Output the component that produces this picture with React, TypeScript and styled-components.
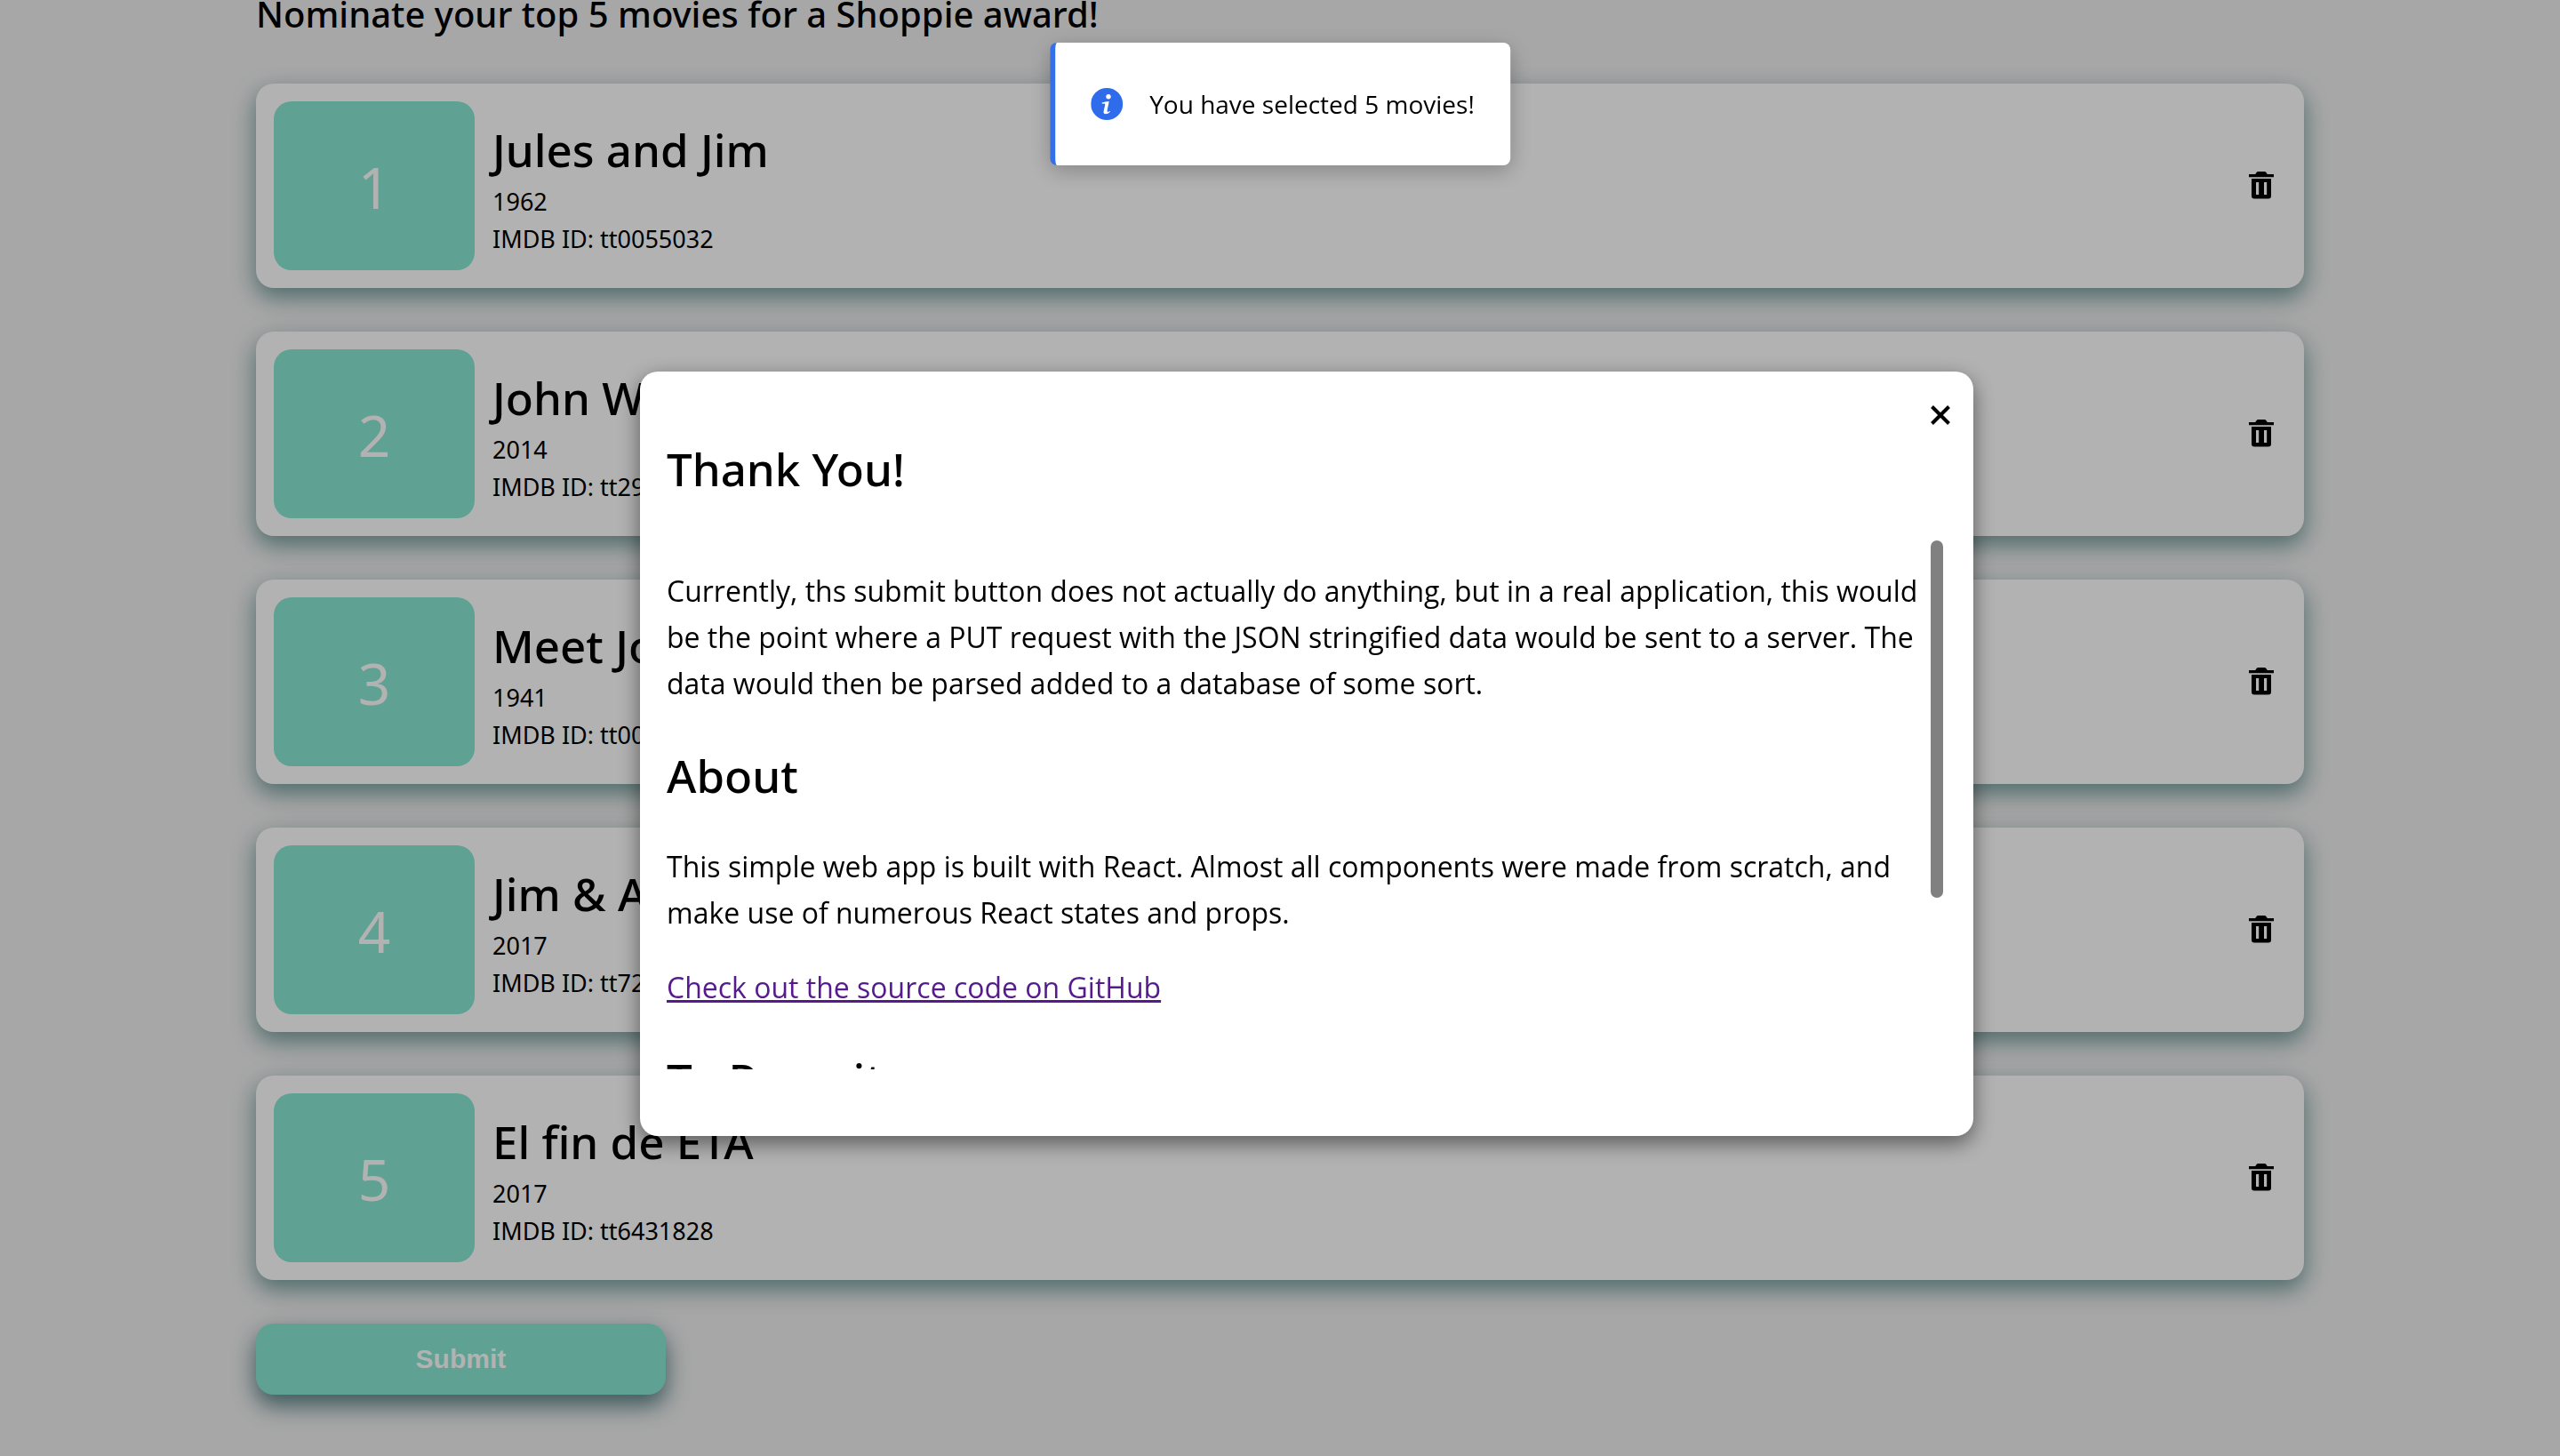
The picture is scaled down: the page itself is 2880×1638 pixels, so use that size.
import React, { useEffect, useRef, useState } from "react";
import styled, { createGlobalStyle } from "styled-components";

const headingFont = `"Noto Sans", "Open Sans", sans-serif`;
const bodyFont = `"Open Sans", "Noto Sans", sans-serif`;
const mint = "#89e7d2";

const GlobalStyle = createGlobalStyle`
  * { box-sizing: border-box; }
  body {
    margin: 0;
    background: #f0f0f0;
    color: #000;
    font-family: ${bodyFont};
  }
  h1, h2, h3, p, ol { margin: 0; padding: 0; }
`;

const Page = styled.main`
  min-height: 100vh;
  padding: 0 10% 60px;
`;

const PageHeading = styled.h1`
  margin-bottom: 62px;
  font: 500 40px/32px ${headingFont};
`;

const MovieList = styled.ol`
  display: flex;
  flex-direction: column;
  gap: 49px;
  list-style: none;
`;

const Card = styled.li`
  display: flex;
  align-items: center;
  gap: 20px;
  padding: 20px;
  border-radius: 20px;
  background: #fff;
  box-shadow: 0 10px 24px rgba(43, 112, 107, 0.6), 0 10px 40px rgba(60, 60, 90, 0.1);
`;

const Rank = styled.div`
  display: flex;
  align-items: center;
  justify-content: center;
  width: 226px;
  height: 190px;
  padding-top: 4px;
  border-radius: 20px;
  background: ${mint};
  color: #fff;
  font: 400 64px/88px ${headingFont};
`;

const Details = styled.div`
  flex: 1;
  align-self: flex-start;
  padding-top: 18px;
`;

const MovieTitle = styled.h2`
  margin-bottom: 2px;
  font: 500 51px/72px ${headingFont};
`;

const Meta = styled.p`
  font: 400 27px/42px ${headingFont};
`;

const IconButton = styled.button<{ $size: number }>`
  display: flex;
  align-items: center;
  justify-content: center;
  width: ${(p) => p.$size}px;
  height: ${(p) => p.$size}px;
  padding: 0;
  border: 0;
  background: none;
  color: #000;
  cursor: pointer;
`;

const RemoveSlot = styled.div`
  padding-right: 12px;
`;

const SubmitButton = styled.button`
  width: 20%;
  height: 80px;
  margin-top: 49px;
  border: 0;
  border-radius: 20px;
  background: ${mint};
  color: #fff;
  font: 700 30px/40px "Liberation Sans", Arial, sans-serif;
  box-shadow: 0 12px 24px rgba(35, 90, 95, 0.7), 0 10px 40px rgba(60, 60, 90, 0.1);
  cursor: pointer;
`;

const Overlay = styled.div`
  position: fixed;
  inset: 0;
  background: rgba(0, 0, 0, 0.3);
`;

const Modal = styled.section`
  position: absolute;
  top: 418px;
  left: 25%;
  width: calc(50% + 60px);
  padding-bottom: 75px;
  border-radius: 20px;
  background: #fff;
  box-shadow: 0 8px 24px rgba(0, 0, 0, 0.5);
`;

const ModalBar = styled.div`
  display: flex;
  justify-content: flex-end;
  padding: 34px 22px 10px;
`;

const ModalHeading = styled.h2`
  font: 500 51px/70px ${headingFont};
`;

const ModalTop = styled.header`
  padding: 0 30px 46px;
`;

const ScrollRow = styled.div`
  display: flex;
  height: 595px;
  padding: 0 34px 0 30px;
`;

const ScrollArea = styled.div`
  flex: 1;
  min-width: 0;
  padding: 31px 0 42px;
  overflow-y: auto;
  scrollbar-width: none;
`;

const Track = styled.div`
  width: 14px;
`;

const Thumb = styled.div`
  border-radius: 7px;
  background: #808080;
`;

const Article = styled.div`
  display: flex;
  flex-direction: column;
  gap: 42px;
  font: 400 32px/52px ${bodyFont};
`;

const Copy = styled.div`
  display: flex;
  flex-direction: column;
  gap: 32px;
`;

const TextLink = styled.a`
  color: #551a8b;
  text-decoration: underline;
`;

const Toast = styled.div`
  position: absolute;
  top: 48px;
  left: 50%;
  transform: translateX(-50%);
  display: flex;
  align-items: center;
  gap: 30px;
  height: 138px;
  padding: 0 40px;
  border-left: 6px solid #3470e8;
  border-radius: 8px;
  background: #fff;
  font: 400 28px/40px ${bodyFont};
  white-space: nowrap;
  box-shadow: 0 6px 24px rgba(0, 0, 0, 0.25);
`;

const TrashIcon = () => (
  <svg width="32" height="36" viewBox="0 1 32 36" aria-hidden="true">
    <path d="M2 6h7.2l1.6-2.2Q11.4 3 12.4 3h7.2q1 0 1.6.8L22.8 6H30v3.2H2z" fill="currentColor" />
    <path
      fillRule="evenodd"
      d="M5 11h22v19.6a3 3 0 0 1-3 3H8a3 3 0 0 1-3-3zM10 15v14h3.2V15zM19 15v14h3.2V15z"
      fill="currentColor"
    />
  </svg>
);

const CloseIcon = () => (
  <svg width="30" height="30" viewBox="0 0 30 30" aria-hidden="true">
    <path d="M5.5 5.5l19 19M24.5 5.5l-19 19" stroke="currentColor" strokeWidth="4" />
  </svg>
);

const InfoIcon = () => (
  <svg width="36" height="36" viewBox="0 0 36 36" aria-hidden="true">
    <circle cx="18" cy="18" r="18" fill="#2e6ceb" />
    <circle cx="19.8" cy="9.8" r="2.7" fill="#fff" />
    <path
      d="M12.4 16.4q4-1.5 8-1.5-.2 2.4-1.2 6.4-.8 3.4-.8 4.6 0 1 .9 1 .8 0 2.2-.8l.3.7q-2.6 2.5-5.3 2.5-2.2 0-2.2-2.1 0-1 .9-4.6.8-3.200.8-4.1 0-1.100-1.100-1.100-.8 0-2.200.3z"
      fill="#fff"
    />
  </svg>
);

function ScrollPane({ children }: { children: React.ReactNode }) {
  const area = useRef<HTMLDivElement>(null);
  const [thumb, setThumb] = useState({ size: 100, offset: 0 });

  const measure = () => {
    const el = area.current;
    if (!el) return;
    setThumb({
      size: (el.clientHeight / el.scrollHeight) * 100,
      offset: (el.scrollTop / el.scrollHeight) * el.clientHeight,
    });
  };

  useEffect(() => {
    measure();
    window.addEventListener("resize", measure);
    return () => window.removeEventListener("resize", measure);
  }, []);

  return (
    <ScrollRow>
      <ScrollArea ref={area} tabIndex={0} onScroll={measure}>
        {children}
      </ScrollArea>
      <Track aria-hidden="true">
        <Thumb style={{ height: `${thumb.size}%`, marginTop: thumb.offset }} />
      </Track>
    </ScrollRow>
  );
}

const movies = [
  { title: "Jules and Jim", year: 1962, id: "tt0055032" },
  { title: "John Wick", year: 2014, id: "tt2911666" },
  { title: "Meet John Doe", year: 1941, id: "tt0033891" },
  { title: "Jim & Andy", year: 2017, id: "tt7218518" },
  { title: "El fin de ETA", year: 2017, id: "tt6431828" },
];

export default function App() {
  return (
    <>
      <GlobalStyle />
      <Page>
        <PageHeading>Nominate your top 5 movies for a Shoppie award!</PageHeading>
        <MovieList>
          {movies.map((movie, i) => (
            <Card key={movie.id}>
              <Rank>{i + 1}</Rank>
              <Details>
                <MovieTitle>{movie.title}</MovieTitle>
                <Meta>{movie.year}</Meta>
                <Meta>IMDB ID: {movie.id}</Meta>
              </Details>
              <RemoveSlot>
                <IconButton type="button" $size={32} aria-label={`Remove ${movie.title}`}>
                  <TrashIcon />
                </IconButton>
              </RemoveSlot>
            </Card>
          ))}
        </MovieList>
        <SubmitButton type="button">Submit</SubmitButton>
      </Page>
      <Overlay>
        <Modal role="dialog" aria-modal="true" aria-labelledby="thanks">
          <ModalBar>
            <IconButton type="button" $size={30} aria-label="Close">
              <CloseIcon />
            </IconButton>
          </ModalBar>
          <ModalTop>
            <ModalHeading id="thanks">Thank You!</ModalHeading>
          </ModalTop>
          <ScrollPane>
            <Article>
              <p>
                Currently, ths submit button does not actually do anything, but in a real application, this would be
                the point where a PUT request with the JSON stringified data would be sent to a server. The data would
                then be parsed added to a database of some sort.
              </p>
              <ModalHeading as="h3">About</ModalHeading>
              <Copy>
                <p>
                  This simple web app is built with React. Almost all components were made from scratch, and make use
                  of numerous React states and props.
                </p>
                <p>
                  <TextLink href="#source">Check out the source code on GitHub</TextLink>
                </p>
              </Copy>
              <ModalHeading as="h3">To Recruiters</ModalHeading>
              <p>
                Thank you for taking the time to look through this project. It was a pleasure to build, and there is
                plenty more that could be added to it over time. Feel free to get in touch with any questions about the
                code, the design or the way that the nominations are stored.
              </p>
            </Article>
          </ScrollPane>
        </Modal>
        <Toast role="status">
          <InfoIcon />
          You have selected 5 movies!
        </Toast>
      </Overlay>
    </>
  );
}
